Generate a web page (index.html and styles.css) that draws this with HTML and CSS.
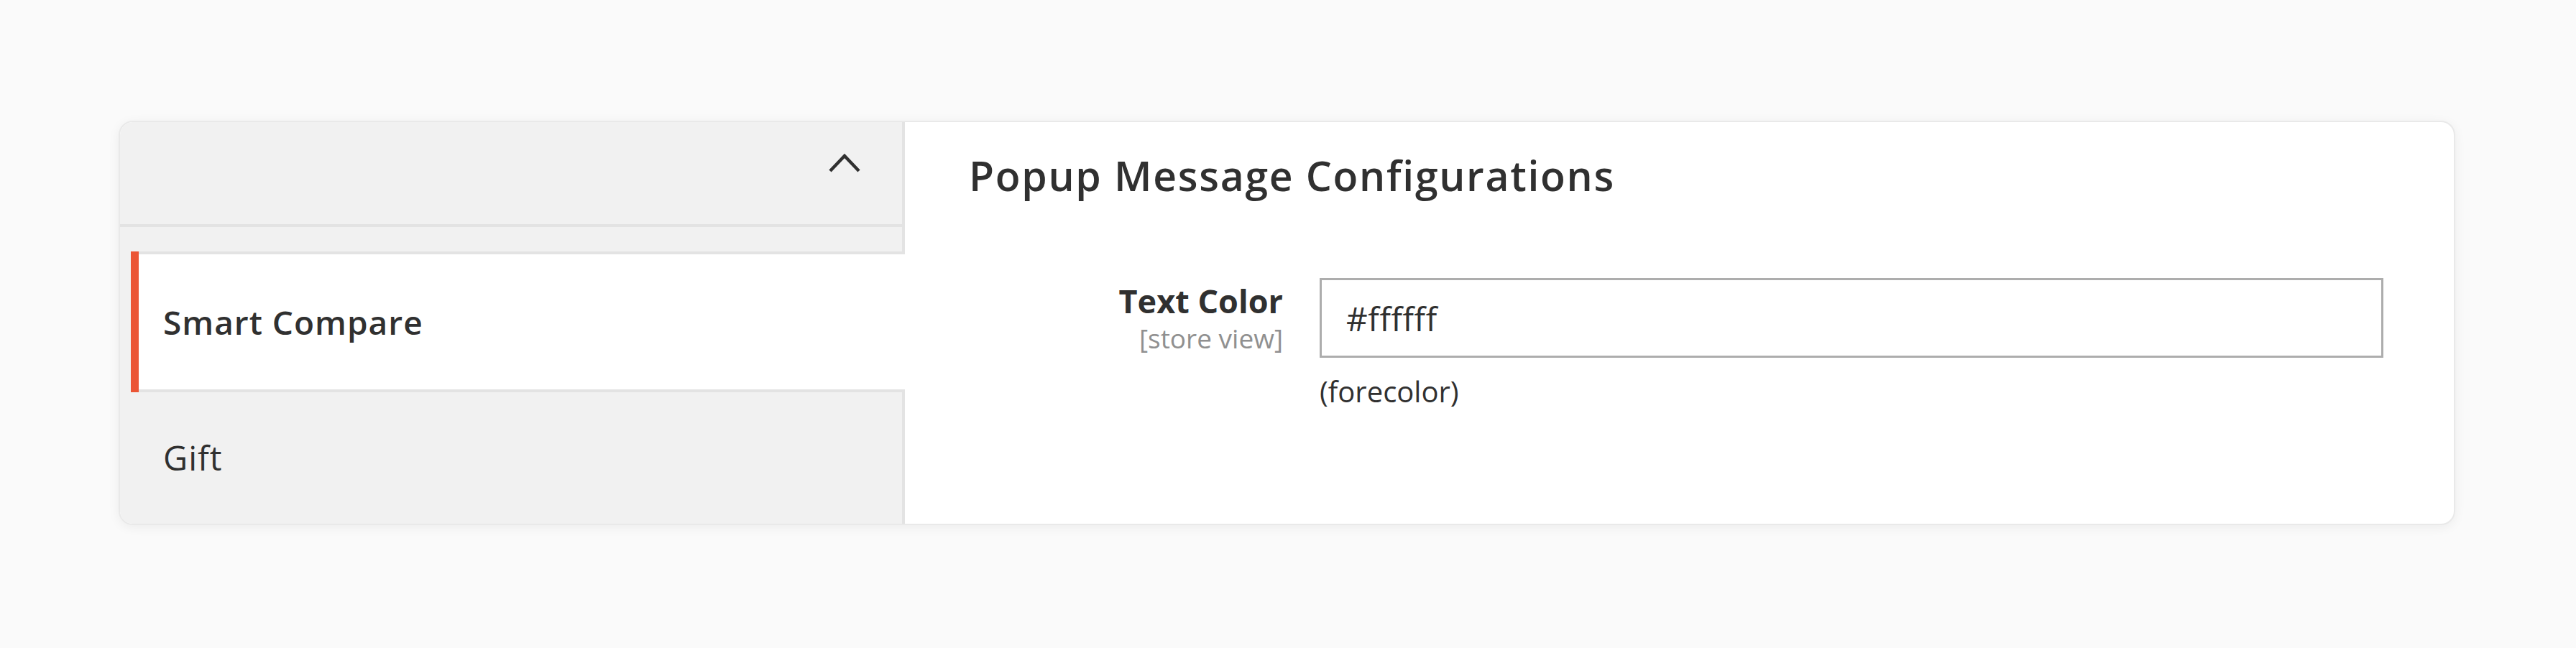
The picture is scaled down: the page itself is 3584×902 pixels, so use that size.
FILE: index.html
```html
<!DOCTYPE html>
<html lang="en">
<head>
<meta charset="utf-8">
<title>Popup Message Configurations</title>
<link rel="stylesheet" href="styles.css">
</head>
<body>
<div class="card">
  <aside class="sidebar">
    <div class="nav-head">
      <svg class="chevron" width="46" height="28" viewBox="0 0 46 28" aria-hidden="true">
        <polyline points="3,25 23,4 43,25" fill="none" stroke="#303030" stroke-width="4.5" stroke-linecap="butt" stroke-linejoin="miter"/>
      </svg>
    </div>
    <div class="nav-gap"></div>
    <div class="nav-item active">
      <span class="accent"></span>
      <span class="nav-body">Smart Compare</span>
    </div>
    <div class="nav-item last">
      <span class="accent"></span>
      <span class="nav-body">Gift</span>
    </div>
  </aside>
  <main class="panel">
    <h1 class="title">Popup Message Configurations</h1>
    <div class="field">
      <div class="label">
        <span class="label-text">Text Color</span>
        <span class="scope">[store view]</span>
      </div>
      <div class="control">
        <div class="input">#ffffff</div>
        <div class="note">(forecolor)</div>
      </div>
    </div>
  </main>
</div>
</body>
</html>
```

FILE: styles.css
```css
* { box-sizing: border-box; }
html, body { margin: 0; padding: 0; }
body {
  background: #fafafa;
  font-family: "Open Sans", "Noto Sans", sans-serif;
  color: #303030;
  padding: 168px 0 0 165px;
  height: 902px;
}
.card {
  width: 3251px;
  height: 563px;
  display: flex;
  background: #ffffff;
  border: 2px solid #e9e9e9;
  border-radius: 20px;
  overflow: hidden;
  box-shadow: 0 3px 16px rgba(0, 0, 0, 0.06);
}
.sidebar {
  width: 1092px;
  flex: none;
  display: flex;
  flex-direction: column;
  background: #f1f1f1;
  border-right: 4px solid #e3e3e3;
}
.nav-head {
  height: 146px;
  flex: none;
  border-bottom: 4px solid #e3e3e3;
  display: flex;
  justify-content: flex-end;
  align-items: flex-start;
  padding: 43px 57px 0 0;
}
.chevron { display: block; }
.nav-gap { height: 34px; flex: none; }
.nav-item {
  display: flex;
  margin-left: 15px;
  font-size: 47px;
  letter-spacing: 1px;
  line-height: 1;
}
.nav-item .accent { width: 11px; flex: none; }
.nav-item .nav-body {
  flex: 1;
  display: flex;
  align-items: center;
  padding-left: 34px;
}
.nav-item.active {
  height: 196px;
  flex: none;
  margin-right: -4px;
  font-size: 46px;
  font-weight: 600;
}
.nav-item.active .accent { background: #eb5535; }
.nav-item.active .nav-body {
  background: #ffffff;
  border-top: 4px solid #e3e3e3;
  border-bottom: 4px solid #e3e3e3;
}
.nav-item.last { flex: 1; }
.panel {
  flex: 1;
  padding: 41px 98px 0 89px;
}
.title {
  margin: 0;
  font-size: 57px;
  line-height: 66px;
  letter-spacing: 1.7px;
  font-weight: 600;
  color: #303030;
}
.field {
  display: flex;
  gap: 51px;
  margin-top: 110px;
}
.label {
  width: 437px;
  flex: none;
  display: flex;
  flex-direction: column;
  align-items: flex-end;
  padding-top: 5px;
}
.label-text {
  font-size: 45px;
  line-height: 54px;
  font-weight: 700;
}
.scope {
  font-size: 37px;
  line-height: 40px;
  color: #909090;
  margin-top: 5px;
}
.control { flex: 1; }
.input {
  height: 111px;
  border: 3px solid #adadad;
  display: flex;
  align-items: center;
  padding-left: 34px;
  font-size: 46px;
  letter-spacing: 0.6px;
  line-height: 1;
  color: #303030;
}
.note {
  font-size: 40px;
  line-height: 50px;
  margin-top: 22px;
}
```
